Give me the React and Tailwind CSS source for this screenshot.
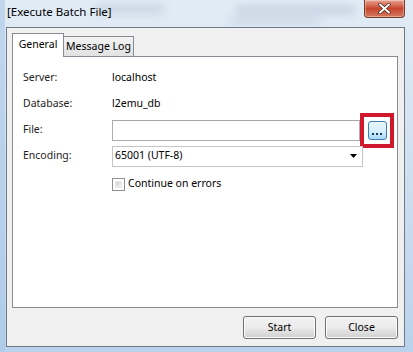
import React from 'react'

const font = { fontFamily: '"Noto Sans", "Segoe UI", sans-serif' }

const Row = ({ label, children }) => (
  <div className="flex items-center h-[26px]">
    <div className="w-[89px] text-[10.5px] text-[#1e1e1e]">{label}</div>
    <div className="flex items-center">{children}</div>
  </div>
)

const Button = ({ children }) => (
  <button className="w-[73px] h-[23px] rounded-[3px] border border-[#707070] bg-gradient-to-b from-[#f2f2f2] via-[#ebebeb] to-[#cfcfcf] text-[10.5px] text-black shadow-[inset_0_0_0_1px_#fcfcfc]">
    {children}
  </button>
)

const App = () => {
  return (
    <div
      className="relative w-[413px] h-[352px] overflow-hidden flex flex-col pl-[6px] pr-[8px] pb-[5px] bg-gradient-to-b from-[#e2ecf6] via-[#cfdff0] to-[#b9d2ec]"
      style={font}
    >
      {/* blurred glass behind the title bar */}
      <div className="absolute left-[95px] top-[4px] w-[70px] h-[10px] bg-[#9aa9ba] opacity-30 blur-[4px] rounded-full" />
      <div className="absolute left-[235px] top-[6px] w-[120px] h-[8px] bg-[#7f95ad] opacity-30 blur-[4px] rounded-full" />
      <div className="absolute left-[230px] top-[18px] w-[90px] h-[6px] bg-[#7f95ad] opacity-25 blur-[4px] rounded-full" />
      <div className="absolute left-0 top-0 w-[5px] h-full bg-[#a9c8e8] opacity-60" />

      <div className="relative flex items-start h-[27px]">
        <div className="pl-[1px] pt-[3px] text-[11.5px] text-black">[Execute Batch File]</div>
        <div className="ml-auto w-[41px] h-[18px] rounded-b-[4px] border border-t-0 border-[#7a3a2c] bg-gradient-to-b from-[#e8a493] via-[#c7452c] to-[#d2785e] flex items-center justify-center shadow-[inset_0_0_0_1px_rgba(255,255,255,0.35)]">
          <svg width="13" height="11" viewBox="0 0 13 11">
            <path d="M2 1.5 L11 9.5 M11 1.5 L2 9.5" stroke="#4a2018" strokeWidth="3.4" strokeLinecap="round" />
            <path d="M2 1.5 L11 9.5 M11 1.5 L2 9.5" stroke="#ffffff" strokeWidth="2" strokeLinecap="round" />
          </svg>
        </div>
      </div>

      <div className="relative flex-1 flex flex-col border border-[#6d7986] bg-[#f0f0f0] pl-[5px] pr-[6px] pt-[5px]">
        <div className="flex items-end h-[23px]">
          <div className="relative z-10 h-[24px] w-[52px] -mb-[1px] border border-b-0 border-[#898c95] bg-white text-[10.5px] text-black flex items-center justify-center pb-[1px]">
            General
          </div>
          <div className="h-[20px] w-[70px] border border-l-0 border-b-0 border-[#898c95] bg-gradient-to-b from-[#f3f3f3] to-[#e2e2e2] text-[10.5px] text-black flex items-center justify-center">
            Message Log
          </div>
        </div>

        <div className="h-[252px] border border-[#898c95] bg-white pl-[10px] pt-[8px]">
          <Row label="Server:">
            <span className="text-[10.5px] text-black">localhost</span>
          </Row>
          <Row label="Database:">
            <span className="text-[10.5px] text-black">l2emu_db</span>
          </Row>
          <Row label="File:">
            <div className="w-[248px] h-[21px] border border-[#abadb3] border-t-[#a3a6ad] bg-white" />
            <div className="w-[34px] h-[35px] border-[4px] border-[#d0182c] flex items-center justify-center">
              <div className="w-[19px] h-[19px] rounded-[3px] border border-[#3c7fb1] bg-gradient-to-b from-[#eaf6fd] via-[#d9f0fc] to-[#a7d9f5] flex items-end justify-center pb-[4px] gap-[2px]">
                <span className="w-[2px] h-[2px] bg-[#1c3d5c]" />
                <span className="w-[2px] h-[2px] bg-[#1c3d5c]" />
                <span className="w-[2px] h-[2px] bg-[#1c3d5c]" />
              </div>
            </div>
          </Row>
          <Row label="Encoding:">
            <div className="w-[251px] h-[21px] border border-[#c5c5c5] bg-white flex items-center pl-[2px] pr-[5px]">
              <span className="text-[10.5px] text-black">65001 (UTF-8)</span>
              <svg className="ml-auto" width="7" height="4" viewBox="0 0 7 4">
                <path d="M0 0 H7 L3.5 4 Z" fill="#000" />
              </svg>
            </div>
          </Row>
          <div className="flex items-center h-[26px] mt-[2px] pl-[89px]">
            <div className="w-[13px] h-[13px] border border-[#8f8f8f] bg-white p-[2px]">
              <div className="w-full h-full bg-gradient-to-br from-[#cbcfd5] to-[#f6f6f6] border border-[#ececec]" />
            </div>
            <span className="ml-[3px] text-[10.5px] text-black">Continue on errors</span>
          </div>
        </div>

        <div className="flex justify-end gap-[9px] mt-[8px]">
          <Button>Start</Button>
          <Button>Close</Button>
        </div>
      </div>
    </div>
  )
}

export default App
